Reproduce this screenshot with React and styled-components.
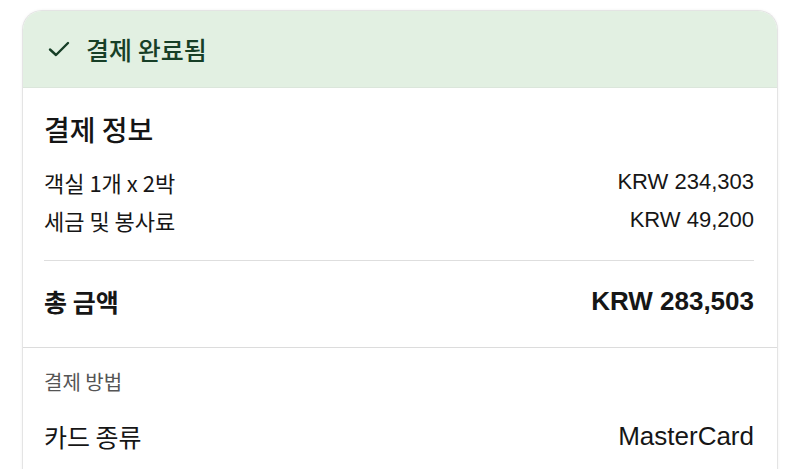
import React from 'react';
import styled, { createGlobalStyle } from 'styled-components';

const GlobalStyle = createGlobalStyle`
  body {
    margin: 0;
    background: #ffffff;
    font-family: 'Liberation Sans', 'Noto Sans CJK KR', sans-serif;
    color: #111111;
  }
`;

const Page = styled.div`
  padding: 10px 22px 0;
  height: 469px;
  box-sizing: border-box;
  overflow: hidden;
`;

const Card = styled.div`
  border: 1px solid #e4e4e4;
  border-bottom: none;
  border-radius: 20px 20px 0 0;
  box-shadow: 0 0 3px rgba(0, 0, 0, 0.06);
  overflow: hidden;
  background: #ffffff;
`;

const Header = styled.div`
  display: flex;
  align-items: center;
  gap: 16px;
  height: 76px;
  padding-left: 25px;
  background: #e2f0e2;
  border-bottom: 1px solid #dbe6db;
  color: #173f27;
  font-family: 'Noto Sans CJK KR', sans-serif;
  font-size: 25px;
  font-weight: 500;
`;

const Section = styled.section`
  padding: ${(p) => p.$pad};
  border-bottom: ${(p) => (p.$last ? 'none' : '1px solid #dcdcdc')};
`;

const Title = styled.h2`
  margin: 0;
  font-family: 'Noto Sans CJK KR', sans-serif;
  font-size: 28px;
  font-weight: 500;
  line-height: 34px;
  color: #151515;
`;

const Row = styled.div`
  display: flex;
  justify-content: space-between;
  align-items: center;
  height: ${(p) => p.$h || 38}px;
  margin-top: ${(p) => p.$mt || 0}px;
  color: #161616;
`;

const Label = styled.span`
  font-family: 'Noto Sans CJK KR', sans-serif;
  font-weight: ${(p) => (p.$bold ? 700 : 400)};
  font-size: ${(p) => p.$size || 22}px;
`;

const Amount = styled.span`
  font-family: 'Liberation Sans', sans-serif;
  font-weight: ${(p) => (p.$bold ? 700 : 400)};
  font-size: ${(p) => p.$size || 22}px;
`;

const Divider = styled.hr`
  margin: 21px 0 0;
  border: none;
  border-top: 1px solid #dedede;
`;

const Caption = styled.div`
  font-family: 'Noto Sans CJK KR', sans-serif;
  font-size: 20px;
  line-height: 28px;
  color: #555555;
`;

const Check = () => (
  <svg width="22" height="16" viewBox="0 0 22 16" fill="none">
    <path d="M2 8.5 L8 14 L20 2" stroke="#173f27" strokeWidth="2.4" strokeLinecap="round" strokeLinejoin="round" />
  </svg>
);

export default function App() {
  return (
    <>
      <GlobalStyle />
      <Page>
        <Card>
          <Header>
            <Check />
            <span>결제 완료됨</span>
          </Header>

          <Section $pad="24px 23px 6px 21px">
            <Title>결제 정보</Title>
            <Row $mt={17}>
              <Label>객실 1개 x 2박</Label>
              <Amount>KRW 234,303</Amount>
            </Row>
            <Row>
              <Label>세금 및 봉사료</Label>
              <Amount>KRW 49,200</Amount>
            </Row>
            <Divider />
            <Row $h={80}>
              <Label $bold $size={25}>총 금액</Label>
              <Amount $bold $size={26}>KRW 283,503</Amount>
            </Row>
          </Section>

          <Section $pad="20px 23px 20px 21px" $last>
            <Caption>결제 방법</Caption>
            <Row $h={40} $mt={20}>
              <Label $size={25}>카드 종류</Label>
              <Amount $size={26}>MasterCard</Amount>
            </Row>
          </Section>
        </Card>
      </Page>
    </>
  );
}
